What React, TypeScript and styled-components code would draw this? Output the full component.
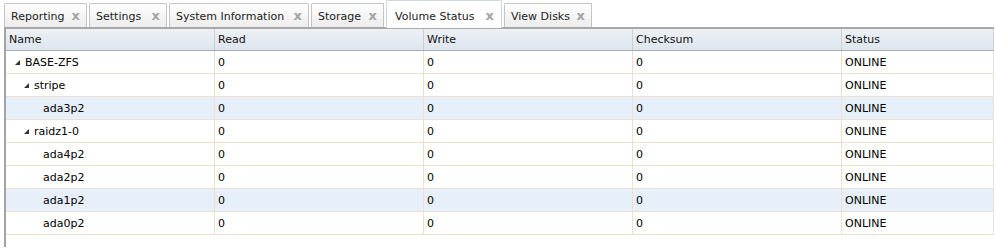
import React from "react";
import styled, { createGlobalStyle } from "styled-components";

const GlobalStyle = createGlobalStyle`
  body {
    margin: 0;
    background: #ffffff;
    font-family: "DejaVu Sans", Verdana, sans-serif;
    font-size: 11px;
    color: #000;
  }
`;

type Node = { name: string; depth: number; expander: boolean; hover?: boolean };

const rows: Node[] = [
  { name: "BASE-ZFS", depth: 0, expander: true },
  { name: "stripe", depth: 1, expander: true },
  { name: "ada3p2", depth: 2, expander: false, hover: true },
  { name: "raidz1-0", depth: 1, expander: true },
  { name: "ada4p2", depth: 2, expander: false },
  { name: "ada2p2", depth: 2, expander: false },
  { name: "ada1p2", depth: 2, expander: false, hover: true },
  { name: "ada0p2", depth: 2, expander: false },
];

const tabs = [
  { label: "Reporting", width: 83 },
  { label: "Settings", width: 78 },
  { label: "System Information", width: 140 },
  { label: "Storage", width: 73 },
  { label: "Volume Status", width: 116, active: true },
  { label: "View Disks", width: 88 },
];

const columns = ["Name", "Read", "Write", "Checksum", "Status"];

const App = () => {
  return (
    <>
      <GlobalStyle />
      <Page>
        <TabBar>
          {tabs.map((t) => (
            <Tab key={t.label} $width={t.width} $active={!!t.active}>
              <span>{t.label}</span>
              <Close>x</Close>
            </Tab>
          ))}
        </TabBar>
        <Grid>
          <HeaderRow>
            {columns.map((c) => (
              <HeaderCell key={c}>{c}</HeaderCell>
            ))}
          </HeaderRow>
          {rows.map((r) => (
            <Row key={r.name} $hover={!!r.hover}>
              <Cell>
                <NameWrap $depth={r.depth}>
                  <Expander $show={r.expander} />
                  {r.name}
                </NameWrap>
              </Cell>
              <Cell>0</Cell>
              <Cell>0</Cell>
              <Cell>0</Cell>
              <Cell>ONLINE</Cell>
            </Row>
          ))}
        </Grid>
      </Page>
    </>
  );
};

export default App;

const Page = styled.div`
  width: 994px;
  height: 249px;
  overflow: hidden;
  background: #fff;
`;

const TabBar = styled.div`
  display: flex;
  align-items: flex-end;
  gap: 2px;
  height: 27px;
  padding-left: 4px;
`;

const Tab = styled.div<{ $width: number; $active: boolean }>`
  box-sizing: border-box;
  width: ${(p) => p.$width}px;
  height: ${(p) => (p.$active ? 28 : 24)}px;
  margin-bottom: ${(p) => (p.$active ? -1 : 0)}px;
  display: flex;
  align-items: center;
  justify-content: space-between;
  padding: ${(p) => (p.$active ? "3px 7px 0 8px" : "1px 6px 0 6px")};
  border: 1px solid ${(p) => (p.$active ? "#cfd8e2" : "#c4c4c4")};
  border-bottom: none;
  border-radius: 2px 2px 0 0;
  background: ${(p) =>
    p.$active ? "#ffffff" : "linear-gradient(#ffffff, #ececec)"};
  color: #222;
  position: relative;
  z-index: ${(p) => (p.$active ? 1 : 0)};
`;

const Close = styled.span`
  font-weight: bold;
  font-size: 13px;
  line-height: 1;
  margin-top: -2px;
  color: #a3a3a3;
`;

const Grid = styled.div`
  border-top: 2px solid #a8a8a8;
  border-left: 2px solid #a4a4a4;
  margin-left: 4px;
  height: 220px;
  box-sizing: border-box;
`;

const HeaderRow = styled.div`
  display: grid;
  grid-template-columns: 209px 209px 209px 209px 1fr;
  height: 21px;
  background: linear-gradient(#edf1f5, #dde5ee);
  border-bottom: 1px solid #a9adb2;
`;

const HeaderCell = styled.div`
  display: flex;
  align-items: center;
  padding-left: 3px;
  border-right: 1px solid #c9d0d8;
  color: #111;
`;

const Row = styled.div<{ $hover: boolean }>`
  display: grid;
  grid-template-columns: 209px 209px 209px 209px 1fr;
  height: 23px;
  box-sizing: border-box;
  border-bottom: 1px solid #f0dfcf;
  background: ${(p) => (p.$hover ? "#e7f0fa" : "#fff")};
`;

const Cell = styled.div`
  display: flex;
  align-items: center;
  padding-left: 3px;
  border-right: 1px solid #f0dfcf;
  color: #000;
`;

const NameWrap = styled.div<{ $depth: number }>`
  display: flex;
  align-items: center;
  padding-left: ${(p) => p.$depth * 9 + 4}px;
`;

const Expander = styled.span<{ $show: boolean }>`
  width: 10px;
  height: 10px;
  display: inline-block;
  position: relative;
  margin-right: 2px;
  visibility: ${(p) => (p.$show ? "visible" : "hidden")};
  &::after {
    content: "";
    position: absolute;
    left: 2px;
    top: 3px;
    width: 0;
    height: 0;
    border-left: 5px solid transparent;
    border-bottom: 5px solid #333;
  }
`;
